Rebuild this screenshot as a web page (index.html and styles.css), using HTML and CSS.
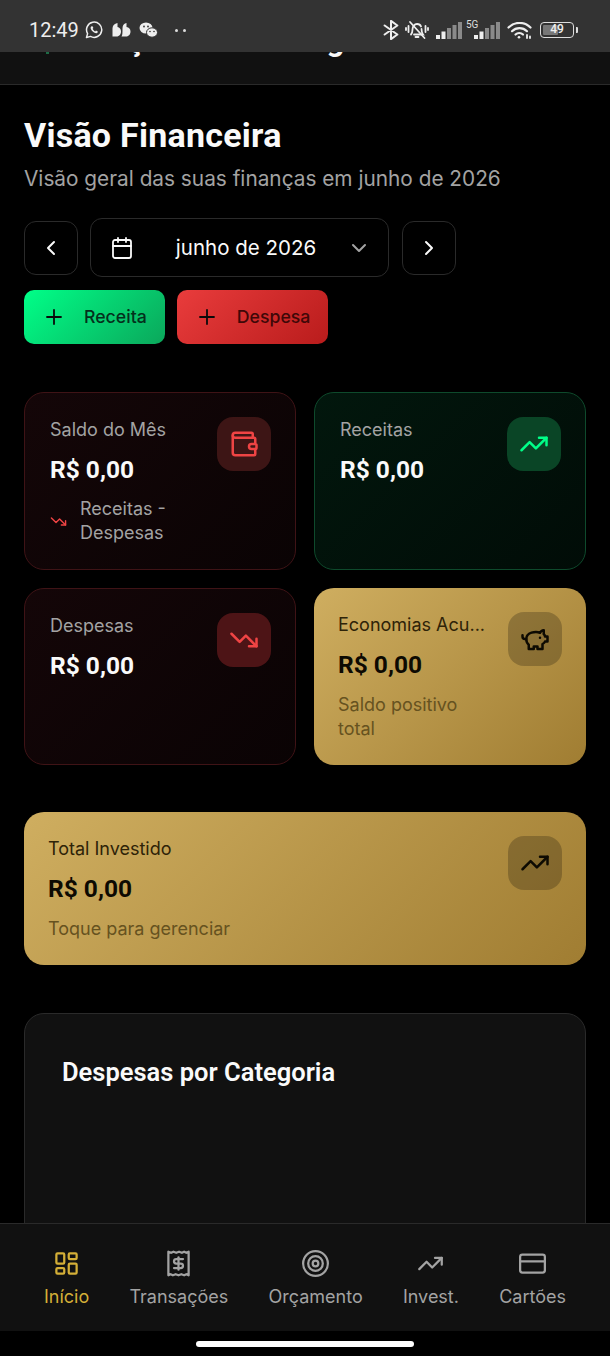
FILE: index.html
```html
<!DOCTYPE html>
<html lang="pt-BR">
<head>
<meta charset="utf-8">
<title>Visão Financeira</title>
<link rel="stylesheet" href="styles.css">
</head>
<body>
<div class="app">
  <div class="statusbar">
    <span class="clock">12:49</span>
    <svg class="st st-wa" viewBox="0 0 18 18"><path d="M1.500 16.500l1.100-3.900A7.600 7.600 0 1 1 5.500 15.400z" fill="none" stroke="#eee" stroke-width="1.500" stroke-linejoin="round"/><path d="M6.600 5.200c-.9.400-1.200 1.500-.8 2.600.8 2 2.300 3.500 4.300 4.300 1.100.4 2.200 0 2.600-.9l.1-.8-1.800-.9-.8.9c-1.100-.5-2.100-1.500-2.600-2.600l.8-.8-.9-1.800z" fill="#eee"/></svg>
    <svg class="st st-q" viewBox="0 0 19 14"><path d="M.5 13.500V5.500C.5 3 2 1 4 .5L5.500 0v4C7.500 4.500 9 6 9 8.500s-1.500 5-4.500 5z" fill="#eee"/><path d="M9.500 13.500c1-1.500 1-4 1-8 0-2.500 1-4.500 2.500-5L14.500 0v4c2.500.5 4 2 4 4.500s-1.500 5-4.500 5z" fill="#eee"/></svg>
    <svg class="st st-wc" viewBox="0 0 19 16"><ellipse cx="7" cy="6" rx="6.500" ry="5.500" fill="#eee"/><ellipse cx="13" cy="10.500" rx="5.500" ry="4.700" fill="#eee" stroke="#333" stroke-width="1"/><circle cx="5" cy="4.500" r=".9" fill="#333"/><circle cx="9" cy="4.500" r=".9" fill="#333"/><circle cx="11" cy="9.500" r=".8" fill="#333"/><circle cx="15" cy="9.500" r=".8" fill="#333"/></svg>
    <span class="dots"><i></i><i></i></span>
    <span class="st-spacer"></span>
    <svg class="st st-bt" viewBox="4 1 16 22" fill="none" stroke="#eee" stroke-width="2.200" stroke-linecap="round" stroke-linejoin="round"><path d="m5 7 14 10-7 5V2l7 5L5 17"/></svg>
    <svg class="st st-bell" viewBox="0 0 24 20" fill="none" stroke="#eee" stroke-width="1.800" stroke-linecap="round"><path d="M6 14.500c1.200-1.200 1.500-2.500 1.500-5 0-3 2-5.500 4.500-5.500 2 0 3.500 1 4 2.500M16.500 9c0 2.500.5 4.200 1.500 5.500H9"/><path d="M10.500 17h3"/><path d="M5 2l14.500 16"/><path d="M3.500 6v6M1 8v2M20.500 6v6M23 8v2"/></svg>
    <svg class="st st-sig1" viewBox="0 0 26 17"><rect x="0" y="13" width="4" height="4" fill="#eee"/><rect x="5.500" y="9.500" width="4" height="7.500" fill="#eee"/><rect x="11" y="6" width="4" height="11" fill="#8a8a8a"/><rect x="16.500" y="3" width="4" height="14" fill="#8a8a8a"/><rect x="22" y="0" width="4" height="17" fill="#8a8a8a"/></svg>
    <span class="sig2"><span class="fiveg">5G</span>
    <svg class="st-sig2" viewBox="0 0 26 17"><rect x="0" y="13" width="4" height="4" fill="#eee"/><rect x="5.500" y="9.500" width="4" height="7.500" fill="#eee"/><rect x="11" y="6" width="4" height="11" fill="#8a8a8a"/><rect x="16.500" y="3" width="4" height="14" fill="#8a8a8a"/><rect x="22" y="0" width="4" height="17" fill="#8a8a8a"/></svg></span>
    <svg class="st st-wifi" viewBox="0 0 25 17" fill="none" stroke="#eee" stroke-width="2.200" stroke-linecap="round"><path d="M1.500 5.500a15.500 15.500 0 0 1 22 0"/><path d="M5 9.200a10.500 10.500 0 0 1 15 0"/><path d="M8.500 12.500a5.500 5.500 0 0 1 7.500 0"/><circle cx="12" cy="15.300" r="1.300" fill="#eee" stroke="none"/><path d="M20 13v3M23 14.500v1.500" stroke-width="1.800"/></svg>
    <span class="battery"><span class="batt-body"><span class="batt-level"></span><span class="batt-num">49</span></span><span class="batt-nub"></span></span>
  </div>

  <header class="topbar">
    <span class="topbar-dot"></span>
    <span class="topbar-title">Orçamento Inteligente</span>
  </header>

  <main class="content">
    <h1 class="page-title">Visão Financeira</h1>
    <p class="page-sub">Visão geral das suas finanças em junho de 2026</p>

    <div class="date-row">
      <button class="nav-btn"><svg class="ic-20" viewBox="0 0 24 24"><path d="m15 18-6-6 6-6"/></svg></button>
      <div class="picker">
        <svg class="ic-24" viewBox="0 0 24 24"><path d="M8 2v4M16 2v4M3 10h18"/><rect x="3" y="4" width="18" height="18" rx="2"/></svg>
        <span class="picker-text">junho de 2026</span>
        <svg class="ic-chev" viewBox="0 0 24 24"><path d="m6 9 6 6 6-6"/></svg>
      </div>
      <button class="nav-btn"><svg class="ic-20" viewBox="0 0 24 24"><path d="m9 18 6-6-6-6"/></svg></button>
    </div>

    <div class="action-row">
      <button class="action action-green"><svg class="ic-24 ic-dark" viewBox="0 0 24 24"><path d="M5 12h14M12 5v14"/></svg><span>Receita</span></button>
      <button class="action action-red"><svg class="ic-24 ic-dark" viewBox="0 0 24 24"><path d="M5 12h14M12 5v14"/></svg><span>Despesa</span></button>
    </div>

    <section class="cards">
      <article class="card card-red">
        <div class="card-body">
          <div class="card-label">Saldo do Mês</div>
          <div class="card-value">R$ 0,00</div>
          <div class="card-trend">
            <svg class="ic-trend" viewBox="0 0 24 24"><path d="M22 17 13.500 8.500 8.500 13.500 2 7"/><path d="M16 17h6v-6"/></svg>
            <span>Receitas - Despesas</span>
          </div>
        </div>
        <div class="badge badge-red"><svg class="ic-28" viewBox="0 0 24 24"><path d="M19 7V4a1 1 0 0 0-1-1H5a2 2 0 0 0 0 4h15a1 1 0 0 1 1 1v4h-3a2 2 0 0 0 0 4h3a1 1 0 0 0 1-1v-2a1 1 0 0 0-1-1"/><path d="M3 5v14a2 2 0 0 0 2 2h15a1 1 0 0 0 1-1v-4"/></svg></div>
      </article>

      <article class="card card-green">
        <div class="card-body">
          <div class="card-label">Receitas</div>
          <div class="card-value">R$ 0,00</div>
        </div>
        <div class="badge badge-green"><svg class="ic-28" viewBox="0 0 24 24"><path d="M22 7 13.500 15.500 8.500 10.500 2 17"/><path d="M16 7h6v6"/></svg></div>
      </article>

      <article class="card card-red">
        <div class="card-body">
          <div class="card-label">Despesas</div>
          <div class="card-value">R$ 0,00</div>
        </div>
        <div class="badge badge-red2"><svg class="ic-28" viewBox="0 0 24 24"><path d="M22 17 13.500 8.500 8.500 13.500 2 7"/><path d="M16 17h6v-6"/></svg></div>
      </article>

      <article class="card card-gold">
        <div class="card-body">
          <div class="card-label">Economias Acu...</div>
          <div class="card-value">R$ 0,00</div>
          <div class="card-note card-note-wrap">Saldo positivo total</div>
        </div>
        <div class="badge badge-gold"><svg class="ic-28" viewBox="0 0 24 24"><path d="M19 5c-1.500 0-2.800 1.400-3 2-3.500-1.500-11-.3-11 5 0 1.800 0 3 2 4.500V20h4v-2h3v2h4v-4c1-.5 1.700-1 2-2h2v-4h-2c0-1-.5-1.500-1-2V5z"/><path d="M2 9v1c0 1.100.9 2 2 2h1"/><path d="M16 11h.01"/></svg></div>
      </article>
    </section>

    <article class="card card-gold card-wide">
      <div class="card-body">
        <div class="card-label">Total Investido</div>
        <div class="card-value">R$ 0,00</div>
        <div class="card-note">Toque para gerenciar</div>
      </div>
      <div class="badge badge-gold"><svg class="ic-28" viewBox="0 0 24 24"><path d="M22 7 13.500 15.500 8.500 10.500 2 17"/><path d="M16 7h6v6"/></svg></div>
    </article>

    <section class="panel">
      <h2 class="panel-title">Despesas por Categoria</h2>
    </section>
  </main>

  <nav class="tabbar">
    <a class="tab tab-active"><svg class="ic-tab" viewBox="0 0 24 24"><rect x="3" y="3" width="7" height="9" rx="1"/><rect x="14" y="3" width="7" height="5" rx="1"/><rect x="14" y="12" width="7" height="9" rx="1"/><rect x="3" y="16" width="7" height="5" rx="1"/></svg><span>Início</span></a>
    <a class="tab"><svg class="ic-tab" viewBox="0 0 24 24"><path d="M3 1.500v21l2-1 2 1 2.500-1 2.500 1 2.500-1 2.500 1 2-1 2 1v-21l-2 1-2-1-2 1-2.500-1-2.500 1-2.500-1-2 1z"/><path d="M16 8h-6a2 2 0 1 0 0 4h4a2 2 0 1 1 0 4H8"/><path d="M12 17.500v-11"/></svg><span>Transações</span></a>
    <a class="tab"><svg class="ic-tab" viewBox="0 0 24 24"><circle cx="12" cy="12" r="11"/><circle cx="12" cy="12" r="6.500"/><circle cx="12" cy="12" r="2.500"/></svg><span>Orçamento</span></a>
    <a class="tab"><svg class="ic-tab" viewBox="0 0 24 24"><path d="M22 7 13.500 15.500 8.500 10.500 2 17"/><path d="M16 7h6v6"/></svg><span>Invest.</span></a>
    <a class="tab"><svg class="ic-tab" viewBox="0 0 24 24"><rect x="1" y="4" width="22" height="16" rx="2"/><path d="M1 10h22"/></svg><span>Cartões</span></a>
  </nav>

  <div class="homebar"><span class="home-pill"></span></div>
</div>
</body>
</html>
```

FILE: styles.css
```css
* { box-sizing: border-box; }
html, body { margin: 0; padding: 0; background: #000; }
body { font-family: Inter, "Liberation Sans", sans-serif; color: #fafafa; }
svg { display: block; flex: none; }

.app { width: 610px; height: 1356px; display: flex; flex-direction: column; overflow: hidden; background: #000; }

/* status bar */
.statusbar { height: 52px; flex: none; background: #333; display: flex; align-items: center; padding: 8px 32px 0 29px; position: relative; z-index: 2; }
.clock { font: 400 20px/24px Roboto, sans-serif; color: #eee; width: 50px; }
.st-wa { width: 18px; height: 18px; margin-left: 6px; }
.st-q { width: 19px; height: 14px; margin-left: 9px; }
.st-wc { width: 19px; height: 16px; margin-left: 8px; }
.dots { display: flex; gap: 5px; margin-left: 17px; }
.dots i { width: 3px; height: 3px; border-radius: 50%; background: #ddd; }
.st-spacer { flex: 1; }
.st-bt { width: 16px; height: 20px; margin-right: 6px; }
.st-bell { width: 24px; height: 20px; margin-right: 7px; }
.st-sig1 { width: 26px; height: 17px; margin-top: 1px; margin-right: 4px; }
.sig2 { position: relative; width: 34px; height: 17px; margin-top: 1px; margin-right: 7px; display: block; }
.st-sig2 { width: 26px; height: 17px; position: absolute; right: 0; top: 0; }
.fiveg { position: absolute; left: 0; top: -3px; font: 400 10px/12px Roboto, sans-serif; color: #ddd; }
.st-wifi { width: 25px; height: 17px; margin-right: 8px; margin-top: 1px; }
.battery { display: flex; align-items: center; gap: 2px; }
.batt-body { width: 34px; height: 16px; border: 1.500px solid #ddd; border-radius: 4px; position: relative; display: block; padding: 2px; }
.batt-level { display: block; width: 15px; height: 100%; background: #777; border-radius: 1px; }
.batt-num { position: absolute; left: 0; right: 0; top: 0; text-align: center; font: 500 12px/13px Roboto, sans-serif; color: #eee; }
.batt-nub { width: 2px; height: 6px; background: #ddd; border-radius: 0 1px 1px 0; }

/* clipped app header */
.topbar { height: 33px; flex: none; background: #111; border-bottom: 1px solid #2a2a2a; overflow: hidden; position: relative; }
.topbar-dot { position: absolute; left: 46px; top: 0; width: 3px; height: 2px; background: #1d6b45; }
.topbar-title { display: block; margin: -29px 0 0 95px; font: 700 31px/36px Roboto, sans-serif; color: #fafafa; white-space: nowrap; }

/* page */
.content { flex: 1; min-height: 0; overflow: hidden; padding: 30px 24px 0; }
.page-title { margin: 0; font: 700 34px/40px Roboto, sans-serif; letter-spacing: .25px; color: #fafafa; }
.page-sub { margin: 10px 0 0; font-size: 20.800px; line-height: 28px; color: #a3a3a3; }

.date-row { display: flex; align-items: center; gap: 12px; margin-top: 25px; }
.nav-btn { width: 54px; height: 54px; background: #000; border: 1px solid #2a2a2a; border-radius: 12px; display: flex; align-items: center; justify-content: center; padding: 0; }
.nav-btn svg { stroke: #fafafa; }
.picker { width: 299px; height: 59px; margin-right: 1px; border: 1px solid #2a2a2a; border-radius: 12px; display: flex; align-items: center; padding: 0 17px 0 19px; }
.picker-text { flex: 1; text-align: center; font-size: 20.500px; color: #fafafa; padding-left: 11px; }
.ic-20, .ic-24, .ic-chev, .ic-28, .ic-trend, .ic-tab { fill: none; stroke-linecap: round; stroke-linejoin: round; stroke-width: 2; }
.ic-20 { width: 24px; height: 24px; stroke-width: 2; }
.ic-24 { width: 24px; height: 24px; stroke: #fafafa; stroke-width: 1.800; }
.ic-chev { width: 24px; height: 24px; stroke: #a3a3a3; }
.ic-dark { stroke: #0a0a0a; }

.action-row { display: flex; gap: 12px; margin-top: 13px; }
.action { height: 54px; border: 0; border-radius: 10px; display: flex; align-items: center; gap: 18px; padding: 0 18px; font: 500 17.700px/24px Inter, sans-serif; }
.action-green { background: linear-gradient(135deg, #00ff88, #0ba75b); color: #04301c; }
.action-red { background: linear-gradient(135deg, #e93c3c, #b91c1c); color: #3f0808; }

.cards { display: grid; grid-template-columns: 272px 272px; gap: 18px; margin-top: 48px; }
.card { display: flex; justify-content: space-between; align-items: flex-start; border-radius: 20px; padding: 25px 24px 24px 25px; }
.card-body { min-width: 0; flex: 1; }
.card-label { font-size: 18px; line-height: 24px; color: #a3a3a3; }
.card-value { margin-top: 11px; font: 700 24.500px/34px Roboto, sans-serif; color: #fafafa; }
.card-trend { display: flex; align-items: center; gap: 13px; margin-top: 10px; font-size: 18px; line-height: 24px; color: #a3a3a3; width: 145px; }
.ic-trend { width: 17px; height: 17px; stroke: #ef4444; }
.card-red { background: linear-gradient(135deg, #140608, #0a0304); border: 1px solid #3f1316; }
.card-green { background: linear-gradient(135deg, #02170d, #010c07); border: 1px solid #0e4a2c; }
.card-gold { background: linear-gradient(135deg, #cfae60, #a07d32); padding: 25px 24px 24px; }
.card-gold .card-label { color: #2e2308; }
.card-gold .card-value { color: #0d0a02; }
.card-note { margin-top: 11px; font-size: 18px; line-height: 24px; color: #66521f; }
.card-note-wrap { width: 135px; }
.card-wide { margin-top: 47px; }

.badge { width: 54px; height: 54px; flex: none; margin-top: -1px; border-radius: 16px; display: flex; align-items: center; justify-content: center; }
.ic-28 { width: 30px; height: 30px; }
.badge-red { background: #3d1515; }
.badge-red svg { stroke: #ef4444; }
.badge-red2 { background: #4d1416; }
.badge-red2 svg { stroke: #ef4444; }
.badge-green { background: #0a4526; }
.badge-green svg { stroke: #00ff88; }
.badge-gold { background: rgba(0, 0, 0, .22); }
.badge-gold svg { stroke: #0d0a02; }

.panel { margin-top: 48px; height: 300px; background: #111; border: 1px solid #2a2a2a; border-radius: 20px; padding: 40px 37px; }
.panel-title { margin: 0; font: 600 25.500px/36px Roboto, sans-serif; color: #fafafa; }

/* tabs */
.tabbar { height: 108px; flex: none; background: #111; border-top: 1px solid #2a2a2a; display: flex; justify-content: space-between; padding: 26px 44px 0; position: relative; }
.tab { display: flex; flex-direction: column; align-items: center; gap: 8px; font-size: 18px; line-height: 24px; color: #a3a3a3; }
.ic-tab { width: 27px; height: 27px; stroke: #a3a3a3; }
.tab-active { color: #d4af37; }
.tab-active .ic-tab { stroke: #d4af37; }

.homebar { height: 25px; flex: none; background: #000; display: flex; justify-content: center; padding-top: 10px; }
.home-pill { width: 218px; height: 6px; background: #fff; border-radius: 3px; }
```
